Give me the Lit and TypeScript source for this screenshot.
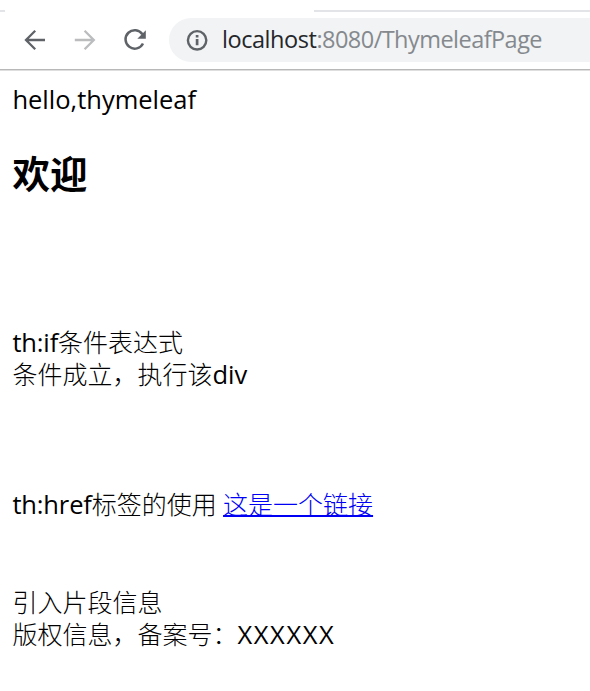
import { LitElement, html, css } from "lit";
import { customElement } from "lit/decorators.js";

@customElement("browser-toolbar")
class BrowserToolbar extends LitElement {
  static styles = css`
    :host { display: block; }
    .tabs { display: flex; justify-content: space-between; height: 12px; align-items: flex-end; }
    .edge { height: 2px; background: #e3e4e8; }
    .left { width: 5px; }
    .right { width: 276px; }
    .bar { box-sizing: border-box; height: 58px; display: flex; align-items: flex-start; padding: 6px 0 0 20px; border-bottom: 1px solid #b8b8b8; box-shadow: 0 1px 0 #dedede; margin-bottom: 1px; }
    .icon { width: 30px; height: 44px; flex: none; display: block; }
    .gap { margin-left: 20px; }
    .address { flex: 1; margin-left: 19px; height: 44px; border-radius: 22px 0 0 22px; background: #f1f3f4; display: flex; align-items: center; padding-left: 13px; }
    .url { font: 23.5px/42px "Open Sans", "Noto Sans", sans-serif; height: 44px; color: #85898e; white-space: pre; margin-left: 10px; letter-spacing: -0.54px; }
    .host { color: #24262a; letter-spacing: -0.45px; }
  `;
  render() {
    return html`
      <div class="tabs"><div class="edge left"></div><div class="edge right"></div></div>
      <div class="bar">
        <svg class="icon" viewBox="0 0 30 44" fill="none" stroke="#5f6368" stroke-width="2.3">
          <path d="M25 22H6.5M15.2 12.8L6 22L15.2 31.2" />
        </svg>
        <svg class="icon gap" viewBox="0 0 30 44" fill="none" stroke="#babcbe" stroke-width="2.3">
          <path d="M4.8 22H23.5M14.6 12.8L23.8 22L14.6 31.2" />
        </svg>
        <svg class="icon gap" viewBox="0 0 30 44" fill="none" stroke="#5f6368" stroke-width="2.5">
          <path d="M22.4 16.3A9.2 9.2 0 1 0 23 25.5" />
          <path d="M25.8 12.3V20.8H17.3Z" fill="#5f6368" stroke="none" />
        </svg>
        <div class="address">
          <svg class="icon" viewBox="0 0 30 44" fill="none" stroke="#5f6368" stroke-width="2.4">
            <circle cx="15.1" cy="22.3" r="9.2" />
            <path d="M15.1 21V27.3M15.1 17V19.4" stroke-width="2.7" />
          </svg>
          <div class="url"><span class="host">localhost</span>:8080/ThymeleafPage</div>
        </div>
      </div>
    `;
  }
}

@customElement("app-root")
class AppRoot extends LitElement {
  static styles = css`
    :host { display: block; height: 691px; overflow: hidden; background: #fff; }
    .page { padding: 11px 12.4px 0; color: #000; font: 300 25px/32.5px "Noto Sans CJK SC", sans-serif; white-space: nowrap; }
    .line { height: 32.5px; }
    .latin { font-family: "Open Sans", "Noto Sans", sans-serif; font-weight: 400; font-size: 25.5px; line-height: 1; }
    .key { letter-spacing: -0.15px; }
    .record { letter-spacing: 1.6px; }
    h2 { margin: 32px 0 128px; font-size: 37.5px; line-height: 50px; font-weight: 700; }
    .blank3 { margin-top: 97.5px; }
    .blank2 { margin-top: 65px; }
    a { color: #0000f5; margin-left: 0.8px; text-decoration: underline; text-decoration-thickness: 2px; text-underline-offset: 1px; text-decoration-skip-ink: none; }
  `;
  render() {
    return html`
      <browser-toolbar></browser-toolbar>
      <div class="page">
        <div class="line"><span class="latin">hello,thymeleaf</span></div>
        <h2>欢迎</h2>
        <div class="line"><span class="latin key">th:if</span>条件表达式</div>
        <div class="line">条件成立，执行该<span class="latin">div</span></div>
        <div class="line blank3"><span class="latin key">th:href</span>标签的使用 <a href="#">这是一个链接</a></div>
        <div class="line blank2">引入片段信息</div>
        <div class="line">版权信息，备案号：<span class="latin record">XXXXXX</span></div>
      </div>
    `;
  }
}
